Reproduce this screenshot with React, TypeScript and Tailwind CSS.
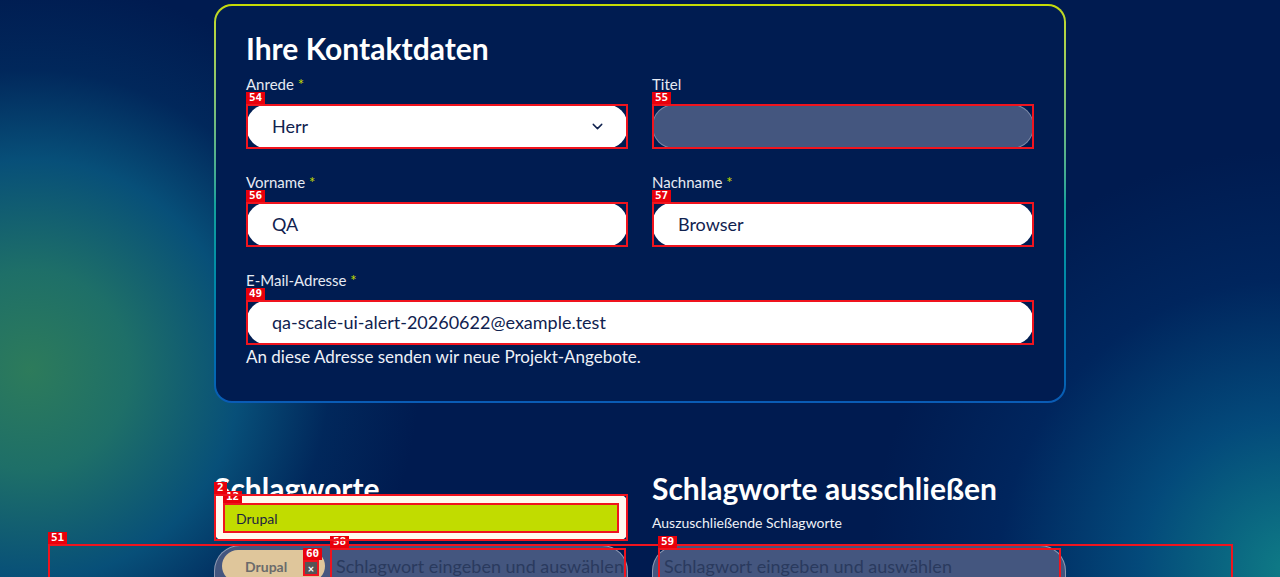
import { ChevronDown } from "lucide-react";

function Mark({ n, className = "" }: { n: string; className?: string }) {
  return (
    <div className={`pointer-events-none absolute z-10 border-2 border-[#f0141e] ${className || "inset-0"}`}>
      <span className="absolute -top-[14px] -left-[2px] bg-[#e8000b] px-[3px] font-['DejaVu_Sans_Mono',monospace] text-[11px] leading-[12px] font-bold text-white">
        {n}
      </span>
    </div>
  );
}

function Field({ label, required, children }: { label: string; required?: boolean; children: React.ReactNode }) {
  return (
    <div>
      <div className="text-[15px] leading-[20px] text-[#e6eaf3]">
        {label}
        {required && <span className="text-[#c4dc00]"> *</span>}
      </div>
      <div className="mt-[10px]">{children}</div>
    </div>
  );
}

function TextInput({ value, mark }: { value: string; mark: string }) {
  return (
    <div className="relative flex h-[45px] items-center rounded-full bg-white pl-[26px] text-[18px] text-[#10224f]">
      {value}
      <Mark n={mark} />
    </div>
  );
}

export default function App() {
  return (
    <div className="relative h-[577px] w-full overflow-hidden bg-[radial-gradient(circle_at_30px_370px,#2d7b5b_0px,#1e6f68_100px,rgba(8,85,125,0.9)_210px,rgba(2,55,105,0.45)_300px,transparent_390px),radial-gradient(circle_at_1290px_570px,#0f7c86_0px,rgba(4,82,130,0.85)_150px,rgba(0,50,110,0.45)_290px,transparent_420px),linear-gradient(#001b50,#001b50)] font-['Lato',sans-serif] text-white">
      <div className="mx-auto w-[852px]">
        {/* contact card */}
        <div className="mt-[4px] rounded-[18px] bg-gradient-to-b from-[#c6dc00] via-[#14a39c] to-[#0a5bb5] p-[2px]">
          <div className="rounded-[16px] bg-[#001c51] px-[30px] pt-[24px] pb-[34px]">
            <h2 className="text-[30px] leading-[36px] font-bold">Ihre Kontaktdaten</h2>
            <div className="mt-[8px] grid grid-cols-2 gap-x-[24px] gap-y-[23px]">
              <Field label="Anrede" required>
                <div className="relative flex h-[45px] items-center justify-between rounded-full bg-white pr-[22px] pl-[26px] text-[18px] text-[#10224f]">
                  Herr
                  <ChevronDown size={17} strokeWidth={2} className="text-[#10224f]" />
                  <Mark n="54" />
                </div>
              </Field>
              <Field label="Titel">
                <div className="relative h-[45px] rounded-full border border-white/30 bg-[#44567f]">
                  <Mark n="55" className="-inset-px" />
                </div>
              </Field>
              <Field label="Vorname" required>
                <TextInput value="QA" mark="56" />
              </Field>
              <Field label="Nachname" required>
                <TextInput value="Browser" mark="57" />
              </Field>
              <div className="col-span-2">
                <Field label="E-Mail-Adresse" required>
                  <TextInput value="qa-scale-ui-alert-20260622@example.test" mark="49" />
                </Field>
                <p className="mt-[2px] text-[17px] leading-[20px] text-[#eef1f7]">
                  An diese Adresse senden wir neue Projekt-Angebote.
                </p>
              </div>
            </div>
          </div>
        </div>

        {/* keywords */}
        <div className="mt-[67px] grid grid-cols-2 gap-x-[24px]">
          <div className="relative">
            <h2 className="text-[30px] leading-[36px] font-bold">Schlagworte</h2>
            <div className="mt-[39px] flex h-[52px] items-start rounded-t-[26px] border border-white/40 bg-[#44567f] pt-[4px] pl-[7px]">
              <div className="relative flex h-[32px] w-[103px] items-center rounded-full bg-[#dfc69b] pl-[23px] text-[14px] font-bold text-[#6b6b6b]">
                Drupal
                <div className="relative mt-[4px] mr-[7px] ml-auto flex h-[14px] w-[14px] items-center justify-center bg-[#555] text-[11px] leading-none text-white">
                  ×
                  <Mark n="60" className="-inset-[1px]" />
                </div>
              </div>
              <div className="relative -mt-[2px] ml-[5px] flex h-[36px] flex-1 items-center pl-[6px] text-[18px] text-[#2a3a5e]">
                Schlagwort eingeben und auswählen
                <Mark n="58" className="inset-0 right-[1px]" />
              </div>
            </div>
            {/* open suggestion list */}
            <div className="absolute top-[24px] left-0 h-[47px] w-full rounded-[10px] bg-[#fffaf0] p-[9px]">
              <div className="relative flex h-[30px] items-center bg-[#c1dc00] pl-[13px] text-[14px] text-[#1b2440]">
                Drupal
                <Mark n="12" />
              </div>
              <Mark n="2" />
            </div>
          </div>
          <div>
            <h2 className="text-[30px] leading-[36px] font-bold">Schlagworte ausschließen</h2>
            <div className="mt-[10px] text-[14px] leading-[14px] text-[#eef1f7]">Auszuschließende Schlagworte</div>
            <div className="mt-[15px] flex h-[52px] items-start rounded-t-[26px] border border-white/40 bg-[#44567f] pl-[5px]">
              <div className="relative mt-[2px] flex h-[36px] w-[403px] items-center pl-[6px] text-[18px] text-[#2a3a5e]">
                Schlagwort eingeben und auswählen
                <Mark n="59" />
              </div>
            </div>
          </div>
        </div>
      </div>
      <div className="pointer-events-none absolute top-[544px] left-[48px] z-[5] h-[40px] w-[1185px] border-2 border-[#f0141e]">
        <span className="absolute -top-[14px] -left-[2px] bg-[#e8000b] px-[3px] font-['DejaVu_Sans_Mono',monospace] text-[11px] leading-[12px] font-bold text-white">
          51
        </span>
      </div>
    </div>
  );
}
